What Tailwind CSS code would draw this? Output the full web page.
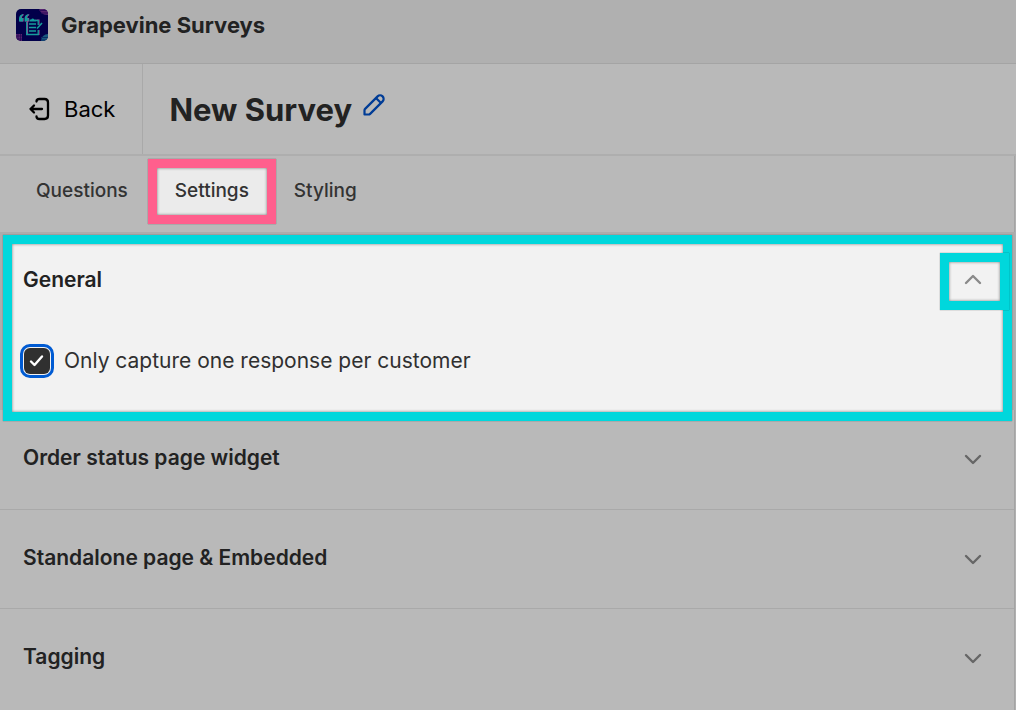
<!DOCTYPE html>
<html lang="en">

<head>
    <meta charset="UTF-8">
    <meta name="viewport" content="width=device-width, initial-scale=1.0">
    <script src="https://cdn.jsdelivr.net/npm/@tailwindcss/browser@4"></script>
    <title>Grapevine Surveys | New Survey</title>
</head>

<body class="min-h-screen flex flex-col overflow-hidden bg-[#b0b0b0] font-['Inter',sans-serif] text-[#222222]">
    <!-- App bar -->
    <header class="flex items-center gap-[13px] h-16 px-4 pb-[14px] border-b border-[#a4a4a4] bg-[#b0b0b0]">
        <svg class="w-8 h-8" viewBox="0 0 32 32" fill="none">
            <defs>
                <clipPath id="logo-clip">
                    <rect width="32" height="32" rx="5" />
                </clipPath>
            </defs>
            <g clip-path="url(#logo-clip)">
                <rect width="32" height="32" fill="#02004a" />
                <circle cx="31" cy="-2" r="8" fill="#56246f" />
                <path d="M23 1.500h9M25 4h7" stroke="#2d0c5c" />
                <circle cx="32" cy="32" r="7" fill="#17597f" />
                <path d="M25 28.500h7M25 31h7" stroke="#0b2c64" />
                <path d="M0 25h6v7H0z" fill="#56246f" />
                <path d="M0 27h6M0 30h6M2 25v7M4.500 25v7" stroke="#1d0651" stroke-width=".7" />
                <path d="M7 5c-3 .5-4 2.500-4 5v2.500h4V9H5.300c0-1.500.5-2.200 1.700-2.700zM12.500 5c-3 .5-4 2.500-4 5v2.500h4V9h-1.700c0-1.500.5-2.200 1.700-2.700z" fill="#a0408f" transform="translate(.7 0)" />
                <path d="M7 5c-3 .5-4 2.500-4 5v2.500h4V9H5.300c0-1.500.5-2.200 1.700-2.700zM12.500 5c-3 .5-4 2.500-4 5v2.500h4V9h-1.700c0-1.500.5-2.200 1.700-2.700z" fill="#159d9c" />
                <path d="M11.500 12v13.500h11.500V21M23 16v-5h-2.500" stroke="#a0408f" stroke-width="1.200" />
                <path d="M10.700 13v12.500h11.500V21M22.200 16v-4.500H20" stroke="#159d9c" stroke-width="1.300" />
                <path d="M13.500 12.500v-2h1.700a1.600 1.600 0 0 1 3 0H20v2z" fill="#159d9c" />
                <path d="M13 15h7M13 18.500h7M13 22h7" stroke="#159d9c" stroke-width="1.300" />
                <path d="M26 14l-5 5.500" stroke="#159d9c" stroke-width="1.600" />
            </g>
        </svg>
        <span class="text-[22px] leading-8 font-bold">Grapevine Surveys</span>
    </header>

    <main class="grow flex flex-col mr-px">
        <!-- Title bar -->
        <div class="flex h-[92px] -mr-px border-b-2 border-[#aeaeae] bg-[#b9b9b9]">
            <button type="button" class="flex items-center gap-3 pl-7 pr-[27px] border-r border-[#a9a9a9] text-[22px] text-black">
                <svg class="w-6 h-6" viewBox="0 0 24 24" fill="none" stroke="currentColor" stroke-width="2.300" stroke-linecap="round" stroke-linejoin="round">
                    <path d="M8.500 4.500C8.500 2.800 9.800 2 11.500 2h5C18.800 2 20 3.200 20 5.500v13c0 2.300-1.200 3.500-3.500 3.500h-5c-1.700 0-3-.8-3-2.500" />
                    <path d="M14 12H2.500M6 8.500L2.500 12 6 15.500" />
                </svg>
                Back
            </button>
            <div class="flex items-center gap-[10px] pl-[26px]">
                <h1 class="pt-[2px] text-[31px] leading-10 font-bold">New Survey</h1>
                <button type="button" aria-label="Rename survey" class="mb-2 text-[#003c96]">
                    <svg class="w-6 h-6" viewBox="0 0 24 24" fill="none" stroke="currentColor" stroke-width="2.200" stroke-linejoin="round">
                        <path d="M2.500 21.500v-4.200c0-.6.200-1 .6-1.400L15.600 3.400a3.500 3.500 0 0 1 5 5L8.100 20.900c-.4.400-.8.600-1.400.6z" />
                        <path d="M14 5l5 5" />
                    </svg>
                </button>
            </div>
        </div>

        <div class="grow flex flex-col border-r border-[#a4a4a4] bg-[#b9b9b9]">
            <!-- Tabs -->
            <nav class="flex items-center gap-[2px] h-[76px] pl-[18px] pb-[6px] text-[19px] font-medium text-[#333333]">
                <a href="#questions" class="px-[18px]">Questions</a>
                <a href="#settings" class="flex items-center justify-center w-32 h-[65px] border-[9px] border-[#ff5f8d] bg-[#ebebeb] shadow-[0_0_1px_#00000080,inset_0_0_3px_#00000080]">Settings</a>
                <a href="#styling" class="px-4">Styling</a>
            </nav>

            <!-- General -->
            <section class="relative h-[178px] -mr-px bg-[#acacac]">
                <div class="absolute left-[3px] right-[3px] top-[3px] -bottom-[11px] border-[9px] border-[#00d7dc] bg-[#f2f2f2] shadow-[0_0_1px_#00000080,inset_0_0_3px_#00000080]"></div>
                <div class="relative flex items-start justify-between pt-[21px] pl-[23px] pr-[6px]">
                    <h2 class="pt-[13px] text-[21px] leading-7 font-semibold">General</h2>
                    <button type="button" aria-label="Collapse General" class="flex items-center justify-center w-[69px] h-[57px] border-[9px] border-[#00d7dc] bg-[#f2f2f2] text-[#8a8a8a] shadow-[0_0_1px_#00000080,inset_0_0_3px_#00000080]">
                        <svg class="w-6 h-6" viewBox="0 0 24 24" fill="none" stroke="currentColor" stroke-width="2.400" stroke-linecap="round" stroke-linejoin="round">
                            <path d="M3 13l7-7 7 7" />
                        </svg>
                    </button>
                </div>
                <div class="relative flex items-center pl-6 mt-[37px]">
                    <input type="checkbox" id="one-response" checked class="peer appearance-none w-[26px] h-[26px] rounded-md bg-[#303030] outline-3 outline-offset-1 outline-[#005bd3]">
                    <svg class="absolute left-[29px] w-4 h-4 pointer-events-none" viewBox="0 0 16 16" fill="none" stroke="white" stroke-width="2.400" stroke-linecap="round" stroke-linejoin="round">
                        <path d="M2 8.500L5.500 12l7.500-8.500" />
                    </svg>
                    <label for="one-response" class="pl-[14px] text-[21px] leading-7 text-[#303030]">Only capture one response per customer</label>
                </div>
            </section>

            <!-- Collapsed sections -->
            <section class="flex items-center justify-between h-[100px] pl-[23px] pr-[30px] pb-[3px] border-b border-[#a9a9a9]">
                <h2 class="text-[21px] leading-7 font-semibold">Order status page widget</h2>
                <button type="button" aria-label="Expand Order status page widget" class="text-[#666666]">
                    <svg class="w-6 h-6" viewBox="0 0 24 24" fill="none" stroke="currentColor" stroke-width="2.400" stroke-linecap="round" stroke-linejoin="round">
                        <path d="M6 10l7 7 7-7" />
                    </svg>
                </button>
            </section>
            <section class="flex items-center justify-between h-[99px] pl-[23px] pr-[30px] pb-[2px] border-b border-[#a9a9a9]">
                <h2 class="text-[21px] leading-7 font-semibold">Standalone page &amp; Embedded</h2>
                <button type="button" aria-label="Expand Standalone page &amp; Embedded" class="text-[#666666]">
                    <svg class="w-6 h-6" viewBox="0 0 24 24" fill="none" stroke="currentColor" stroke-width="2.400" stroke-linecap="round" stroke-linejoin="round">
                        <path d="M6 10l7 7 7-7" />
                    </svg>
                </button>
            </section>
            <section class="flex items-center justify-between h-[99px] pl-[23px] pr-[30px] pb-[3px]">
                <h2 class="text-[21px] leading-7 font-semibold">Tagging</h2>
                <button type="button" aria-label="Expand Tagging" class="text-[#666666]">
                    <svg class="w-6 h-6" viewBox="0 0 24 24" fill="none" stroke="currentColor" stroke-width="2.400" stroke-linecap="round" stroke-linejoin="round">
                        <path d="M6 10l7 7 7-7" />
                    </svg>
                </button>
            </section>
        </div>
    </main>
</body>

</html>
